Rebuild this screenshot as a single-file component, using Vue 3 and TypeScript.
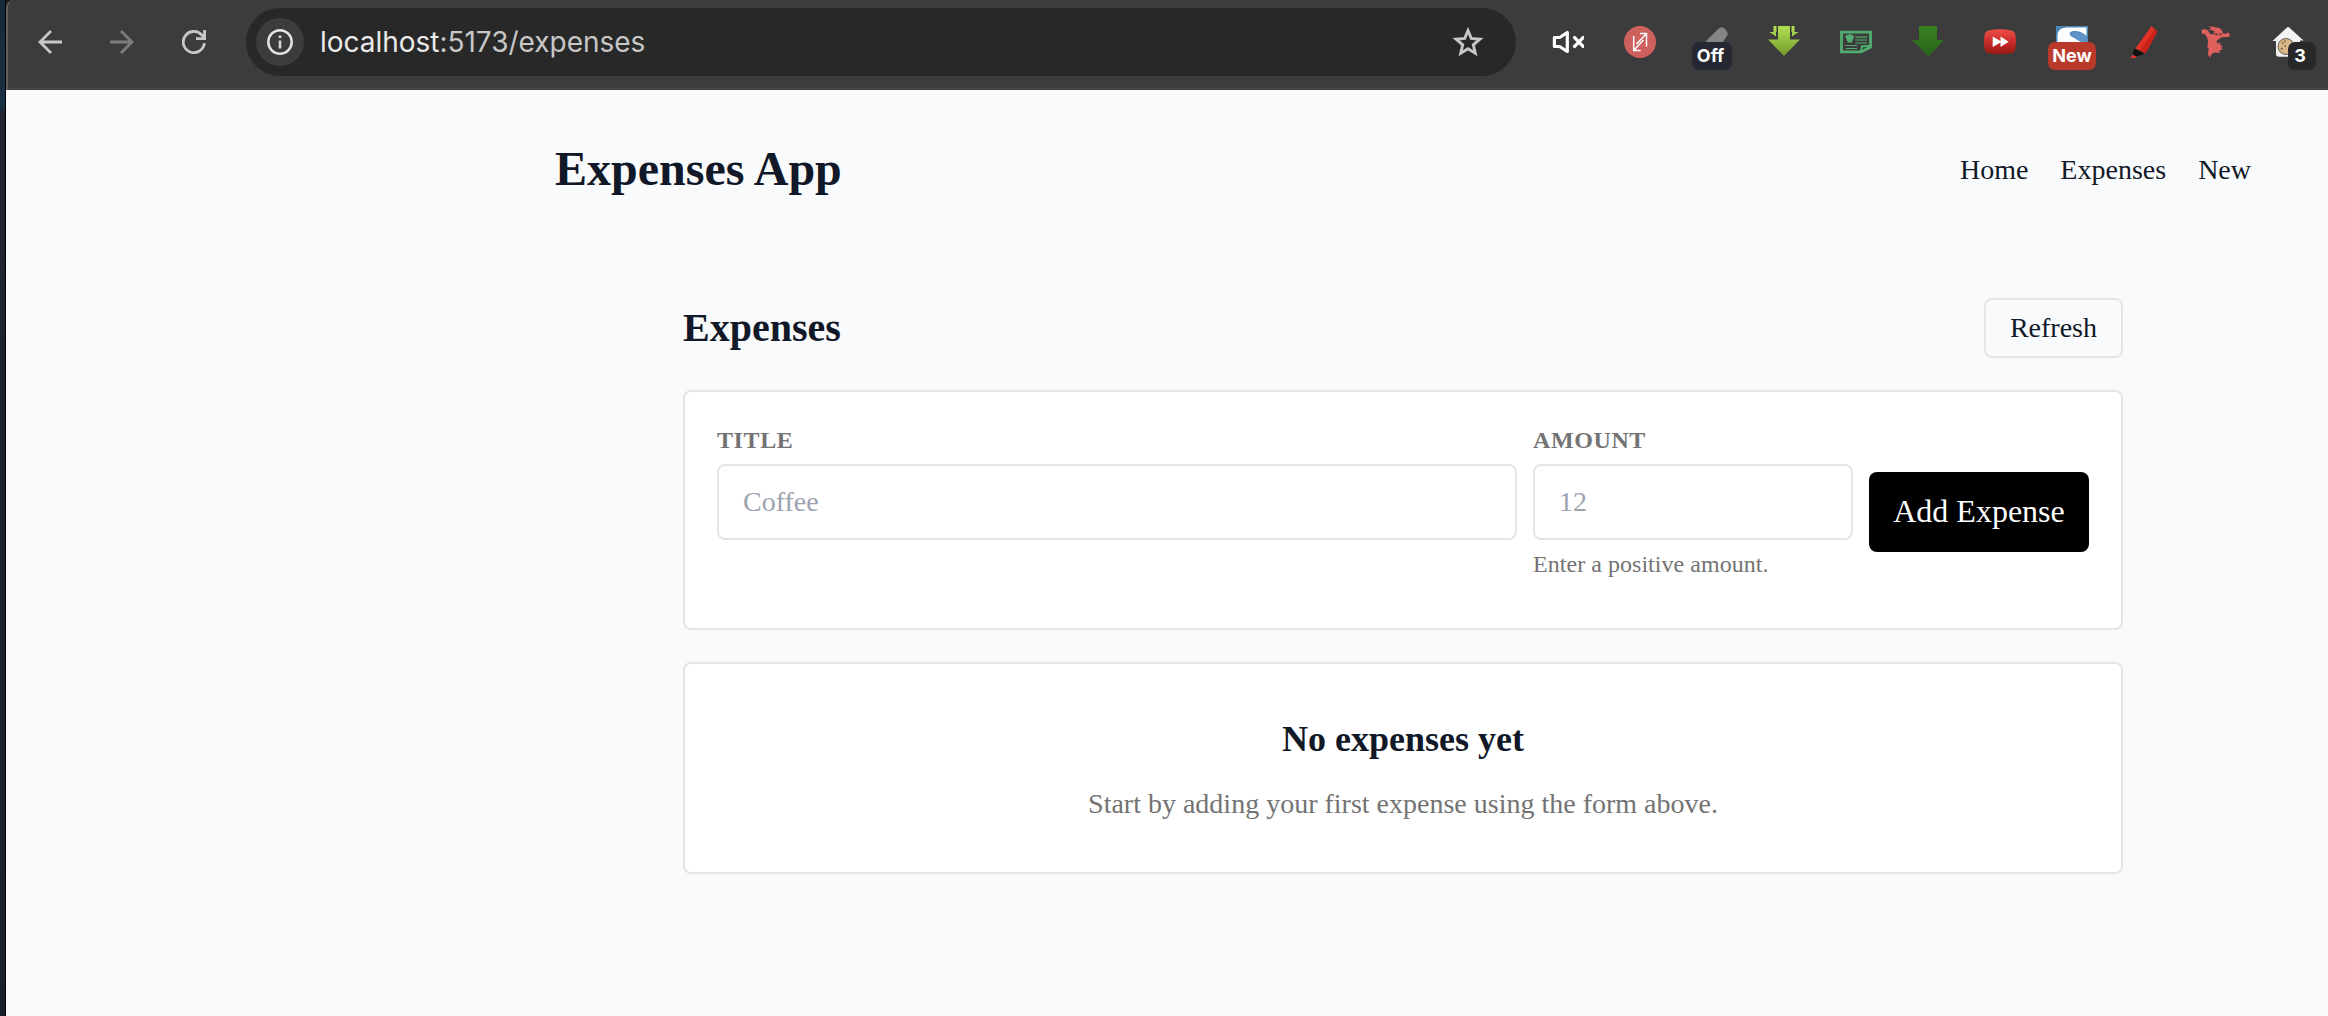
<script setup lang="ts">
import { ref } from 'vue'

const links: string[] = ['Home', 'Expenses', 'New']
const title = ref('')
const amount = ref('')
</script>

<template>
  <div class="screen">
    <div class="desktop-edge"></div>
    <div class="window">
      <div class="toolbar">
        <div class="nav-icons">
          <svg width="24" height="24" viewBox="0 0 24 24" fill="none" stroke="#c7c7c7" stroke-width="2.8"><path d="M24 12H2M13 1L2 12l11 11" /></svg>
          <svg width="24" height="24" viewBox="0 0 24 24" fill="none" stroke="#7d7d7d" stroke-width="2.8"><path d="M0 12h22M11 1l11 11-11 11" /></svg>
          <svg width="24" height="24" viewBox="0 0 24 24" fill="none" stroke="#c7c7c7" stroke-width="2.8"><path d="M22.4 13.2A10.6 10.6 0 1 1 19.6 4.8L22.6 8M22.6 0v8.6H14" /></svg>
        </div>
        <div class="omnibox">
          <span class="info">
            <svg width="26" height="26" viewBox="0 0 26 26"><circle cx="13" cy="13" r="11.7" fill="none" stroke="#e3e3e3" stroke-width="2.5" /><path d="M13 11.5v8" stroke="#d5d5d5" stroke-width="2.6" /><circle cx="13" cy="7.8" r="1.5" fill="#d5d5d5" /></svg>
          </span>
          <span class="url"><b>localhost</b>:5173/expenses</span>
          <svg class="star" width="32" height="30" viewBox="0 0 32 30"><path d="M16 3.5l3.3 8 8.6.7-6.6 5.600 2 8.400L16 21.700l-7.300 4.500 2-8.400L4.100 12.200l8.600-.7z" fill="none" stroke="#c7c7c7" stroke-width="2.9" /></svg>
        </div>
        <div class="extensions">
          <span class="ext"><svg width="32" height="32" viewBox="0 0 32 32" fill="none" stroke="#fff"><path d="M2.400 11.500h5.200L15.300 6.500v19L7.600 20.500H2.400z" stroke-width="3.200" stroke-linejoin="round" /><path d="M22.600 11.600l8.500 8.800M31.100 11.600l-8.500 8.800" stroke-width="3.300" stroke-linecap="round" /></svg></span>
          <span class="ext"><svg width="32" height="32" viewBox="0 0 32 32" fill="none"><circle cx="16" cy="16" r="16" fill="#cd605c" /><path d="M16 7.500h6.500V20.500M9.700 10v14.500h7M22.500 7.500L12.500 18M9.700 24.500L19.500 14" stroke="#fff" stroke-width="1.500" /></svg></span>
          <span class="ext"><svg width="32" height="32" viewBox="0 0 32 32"><path d="M11 14L23 2.300Q26.500-.5 29.500 3.500Q33.500 8 30.500 10.500L27 16H10z" fill="#858585" /></svg><span class="badge off">Off</span></span>
          <span class="ext"><svg width="32" height="32" viewBox="0 0 32 32"><defs><linearGradient id="lime" x2="0" y2="1"><stop stop-color="#b4df54" /><stop offset="1" stop-color="#719b2c" /></linearGradient></defs><path d="M5.500 0h3v6H8v4.500L1.500 6h4zM26.500 0h-3v6h.5v4.500L30.500 6h-4zM10 0h12v13.500h10L16 30 0 13.500h10z" fill="url(#lime)" /></svg></span>
          <span class="ext"><svg width="32" height="32" viewBox="0 0 32 32" fill="none" stroke="#51ad6f"><path d="M1.500 6.200h29v15L21 25.800H1.500z" stroke-width="2.800" /><path d="M21 25.500l1-5 8.500-.8" stroke-width="2" /><path d="M15.500 11.200h11.500M15.500 14h11.500M15.500 17h11.500M5.500 19.500h11.500M5.500 22.500h11.500" stroke-width="1.200" /><path d="M6.500 12.500c-2-2 0-4 1.600-3.300 1-1.200 2.400-1.200 3.200 0 1.900-.7 3.400 1.300 1.700 3.300l-1.200 3.800H7.700z" fill="#51ad6f" stroke-width=".5" /></svg></span>
          <span class="ext"><svg width="32" height="32" viewBox="0 0 32 32"><defs><linearGradient id="forest" x2="0" y2="1"><stop stop-color="#37821f" /><stop offset="1" stop-color="#29621b" /></linearGradient></defs><path d="M7 0h18v14h7L16.500 30.500 0 14h7z" fill="url(#forest)" /></svg></span>
          <span class="ext"><svg width="32" height="32" viewBox="0 0 32 32"><defs><linearGradient id="crimson" x2="0" y2="1"><stop stop-color="#ef4e47" /><stop offset=".5" stop-color="#c92d29" /><stop offset="1" stop-color="#961714" /></linearGradient></defs><path d="M5 4.500Q16 2 27 4.500q4 .5 4.500 5 1 6.500 0 13-.5 4-4.500 4.800-11 2-22 0-4-.8-4.500-4.800-1-6.500 0-13 .5-4.500 4.500-5z" fill="url(#crimson)" /><path d="M8.700 10.500L16.500 15v-4.500l8.200 5.300-8.200 5.300v-4.500L8.700 21z" fill="#fff" /></svg></span>
          <span class="ext"><svg width="32" height="32" viewBox="0 0 32 32"><path d="M0 0h32v16H0z" fill="#4d86b9" /><path d="M1.500 16V9Q2 2 10 1.500h20.500V10Q25 4.500 17.500 5c-5 .5-5 4.500 0 6.500L25 16z" fill="#fff" /><path d="M14 8c4-3.500 11-2.500 17 3v5h-6z" fill="#5e93c8" /></svg><span class="badge new">New</span></span>
          <span class="ext"><svg width="32" height="32" viewBox="-2.300 0 32 32"><path d="M21.300 0l5.700 5.800L15.500 26.500 5 22.500z" fill="#e23126" /><path d="M24.500 3.200L27 5.800 15 27.600 9.500 24.500z" fill="#c92219" /><path d="M4 22.500l10 5.300L6.500 30.500 2.500 28z" fill="#101010" /><path d="M2 29l4.500 1.500-1 1.500H.3z" fill="#f0322a" /></svg></span>
          <span class="ext"><svg width="32" height="32" viewBox="-1 0 32 32"><path d="M.5 4Q4 2.200 7 4.500L9 8l3 .5 1.500-3.500Q11 4 7.500 3.500l3.200-.8L7 .3l4.500.7L11 0l3.500 1.500Q19 1 21 4.500l1 3 3.500.3 1-1.300 2 1 .3 3-3 .5-4.800.3-2.800 1.500-2.700 2.500 1 2.500 3-1.500-.5 3 3 .5-1.800 2 1.300 2-3 .5v2.700l-3.500-.5-3 .5-2.500 2.800L9 32 6.800 28l1-5-1.500-2 1-5L6 11.500 4 8.300.8 7.500z" fill="#e0605e" /><path d="M13.500 7.500l3.200 1.300M18.300 8.800l2.200-1" stroke="#5a3333" stroke-width="1.500" /></svg></span>
          <span class="ext"><svg width="32" height="32" viewBox="0 0 32 32"><path d="M15 1.500q1-1 2.200 0L31.500 14.500H28V28q0 2.800-3 2.800H7q-3 0-3-2.800V15H.5z" fill="#f4f3f4" /><circle cx="14" cy="20.500" r="8" fill="#d6b987" stroke="#655e56" stroke-width="1" /><path d="M10 17h1.500M13 14.500v1.500M9 22l1.500 1.500M12.500 20h1.500" stroke="#735536" stroke-width="1.600" /></svg><span class="badge count">3</span></span>
        </div>
      </div>

      <div class="page">
        <header class="app-header">
          <h1>Expenses App</h1>
          <nav><a v-for="link in links" :key="link">{{ link }}</a></nav>
        </header>
        <main>
          <div class="section-head">
            <h2>Expenses</h2>
            <button class="refresh" type="button">Refresh</button>
          </div>
          <form class="card form" @submit.prevent>
            <div class="field title-field">
              <label for="title">TITLE</label>
              <input id="title" v-model="title" placeholder="Coffee" />
            </div>
            <div class="field amount-field">
              <label for="amount">AMOUNT</label>
              <input id="amount" v-model="amount" placeholder="12" />
              <p>Enter a positive amount.</p>
            </div>
            <button class="add" type="submit">Add Expense</button>
          </form>
          <section class="card empty">
            <h3>No expenses yet</h3>
            <p>Start by adding your first expense using the form above.</p>
          </section>
        </main>
      </div>
    </div>
  </div>
</template>

<style>
body {
  margin: 0;
  overflow: hidden;
}
</style>

<style scoped>
* {
  box-sizing: border-box;
}
.screen {
  display: flex;
  width: 2328px;
  height: 1016px;
  overflow: hidden;
  background: #f9fafb;
  font-family: "Liberation Serif", serif;
  color: #111827;
}
.desktop-edge {
  flex: none;
  width: 6px;
  border-right: 1px solid #000;
  background: linear-gradient(#16293b 0, #193043 105px, #20252f 115px, #17202c 100%);
}
.window {
  flex: 1;
  min-width: 0;
  background: #1c1c1c;
}
.toolbar {
  display: flex;
  height: 90px;
  padding: 8px 24px 0 30px;
  border-left: 2px solid #606060;
  border-top-left-radius: 8px;
  border-bottom: 1px solid #453c3d;
  background: #3c3c3c;
  box-shadow: inset 0 -1px #494949;
}
.nav-icons {
  display: flex;
  gap: 48px;
  width: 208px;
  padding-top: 22px;
}
.nav-icons svg {
  flex: none;
}
.omnibox {
  display: flex;
  align-items: center;
  width: 1270px;
  height: 68px;
  padding: 0 32px 0 10px;
  border-radius: 34px;
  background: #282828;
}
.info {
  display: grid;
  place-items: center;
  width: 48px;
  height: 48px;
  border-radius: 50%;
  background: #3c3c3c;
}
.url {
  flex: 1;
  margin-left: 16px;
  font: 28px/36px Inter, sans-serif;
  letter-spacing: -0.02px;
  color: #c7c7c7;
}
.url b {
  font-weight: 400;
  color: #e9e9e9;
}
.star {
  flex: none;
}
.extensions {
  display: flex;
  gap: 40px;
  margin-left: 36px;
  padding-top: 18px;
}
.ext {
  position: relative;
  flex: none;
  width: 32px;
  height: 32px;
}
.ext svg {
  display: block;
}
.badge {
  position: absolute;
  top: 16px;
  height: 28px;
  border-radius: 7px;
  font: 700 18px/27px Inter, sans-serif;
  text-align: center;
  color: #fff;
}
.off {
  left: -4px;
  width: 40px;
  padding-right: 3px;
  background: #252733;
}
.new {
  left: -8px;
  width: 48px;
  background: #b93a2b;
}
.count {
  left: 16px;
  width: 28px;
  padding-right: 4px;
  background: #282828;
}
.page {
  height: 926px;
  padding: 0 77px 0 549px;
  background: #f9fafc;
}
.app-header {
  display: flex;
  align-items: center;
  justify-content: space-between;
  height: 160px;
}
h1,
h2,
h3,
p {
  margin: 0;
}
h1 {
  padding-bottom: 2px;
  font-size: 48px;
  line-height: 64px;
}
nav {
  display: flex;
  gap: 32px;
  font-size: 28px;
  line-height: 40px;
}
main {
  display: flex;
  flex-direction: column;
  gap: 32px;
  padding: 48px 128px 0;
}
.section-head {
  display: flex;
  align-items: center;
  justify-content: space-between;
  height: 60px;
}
h2 {
  font-size: 40px;
  line-height: 56px;
}
button,
input {
  font-family: inherit;
  color: inherit;
}
.refresh {
  height: 60px;
  padding: 0 24px;
  border: 2px solid #e5e5e5;
  border-radius: 8px;
  background: transparent;
  font-size: 28px;
  line-height: 40px;
}
.card {
  border: 2px solid #e5e5e5;
  border-radius: 8px;
  background: #fff;
}
.form {
  display: flex;
  align-items: flex-start;
  gap: 16px;
  height: 240px;
  padding: 32px;
}
.field {
  display: flex;
  flex-direction: column;
  gap: 8px;
}
.title-field {
  width: 800px;
}
.amount-field {
  width: 320px;
}
label {
  font-size: 24px;
  font-weight: 700;
  line-height: 32px;
  letter-spacing: 0.6px;
  color: #737373;
}
input {
  width: 100%;
  height: 76px;
  padding: 0 24px;
  border: 2px solid #e5e5e5;
  border-radius: 8px;
  background: #fff;
  font-size: 28px;
}
input::placeholder {
  color: #9ca3af;
}
.field p {
  font-size: 24px;
  line-height: 32px;
  letter-spacing: 0.04px;
  color: #737373;
}
.add {
  width: 220px;
  height: 80px;
  margin-top: 48px;
  padding: 0 0 2px;
  border: 0;
  border-radius: 8px;
  background: #000;
  font-size: 32px;
  color: #fff;
}
.empty {
  height: 212px;
  padding: 48px;
  text-align: center;
}
h3 {
  margin-bottom: 18px;
  font-size: 36px;
  line-height: 54px;
}
.empty p {
  font-size: 28px;
  line-height: 40px;
  color: #737373;
}
</style>
